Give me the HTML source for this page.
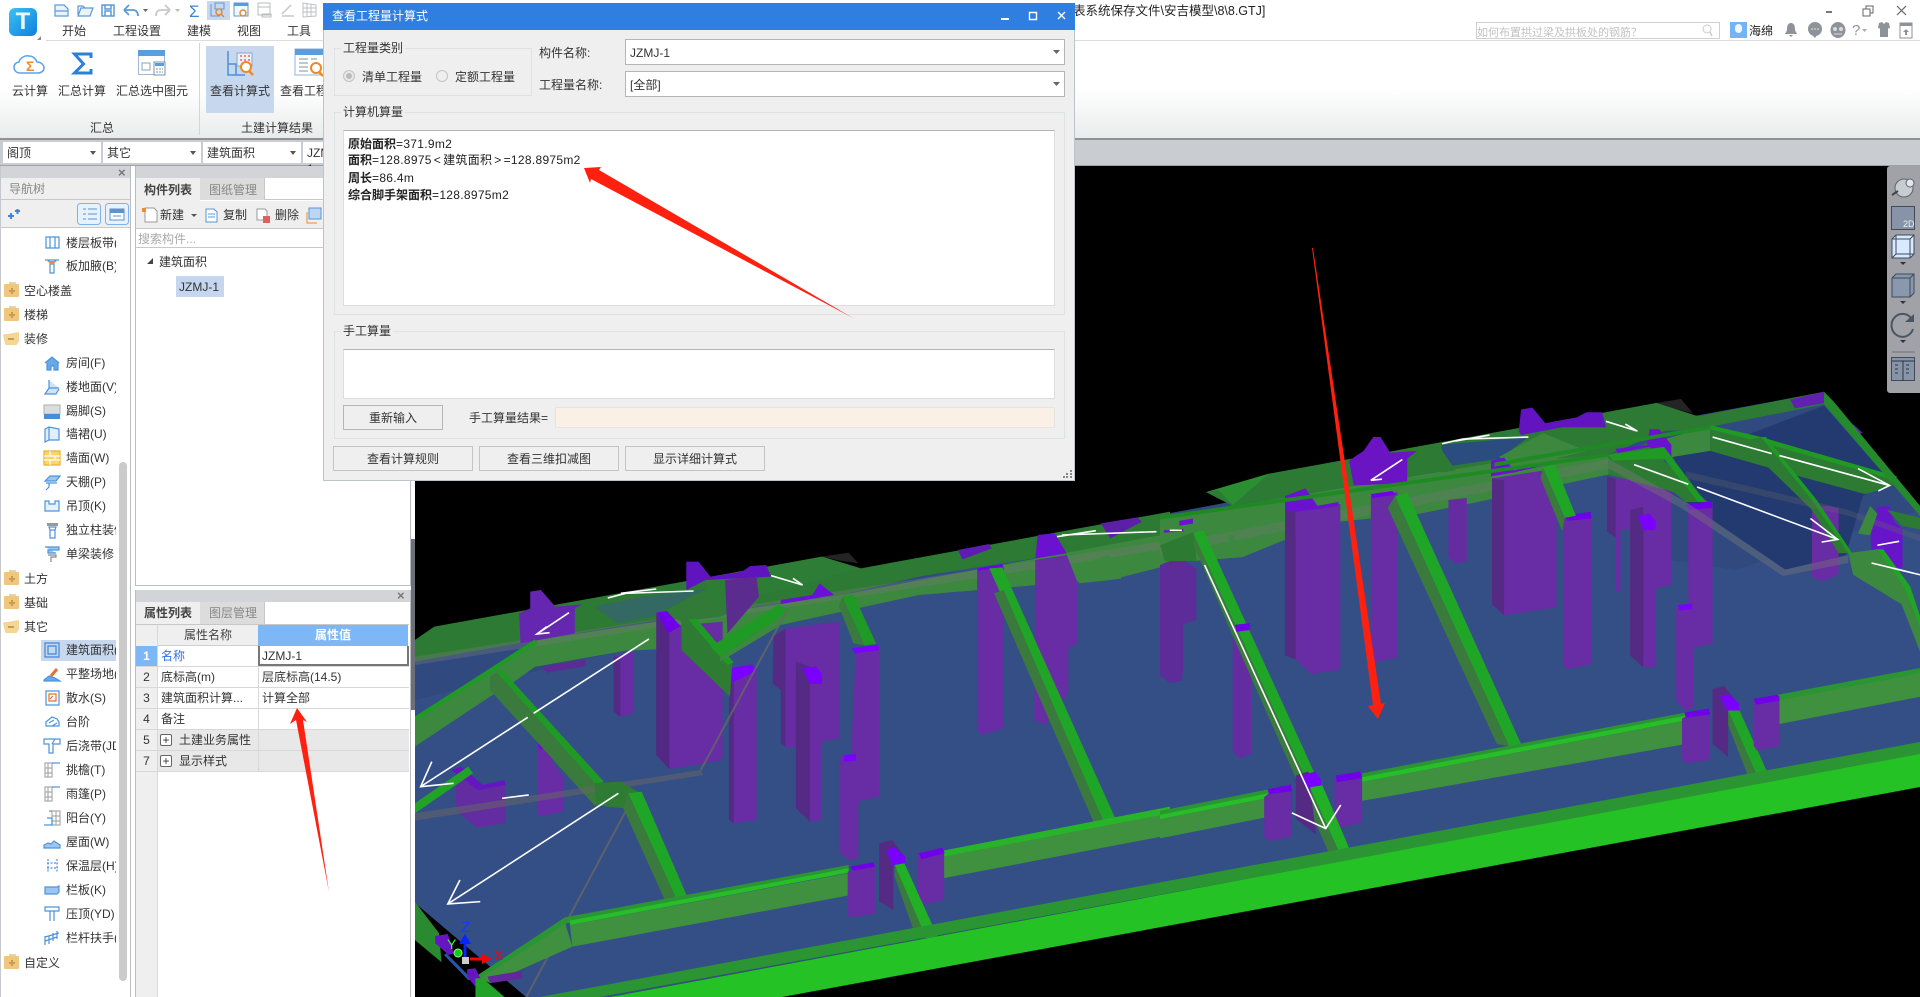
<!DOCTYPE html>
<html lang="zh"><head><meta charset="utf-8"><title>查看工程量计算式</title>
<style>
html,body{margin:0;padding:0;background:#fff}
#r{position:relative;width:1920px;height:997px;overflow:hidden;background:#fff;font:12px/16px "Liberation Sans","Noto Sans CJK SC",sans-serif;color:#333}
.b,.t{position:absolute;box-sizing:border-box}
.t{white-space:nowrap;height:16px}
svg{position:absolute;overflow:visible}
.g{color:#888}
.in{position:absolute;box-sizing:border-box;background:#fff;border:1px solid #b5b5b5}
.btn{position:absolute;box-sizing:border-box;background:#efefef;border:1px solid #c4c4c4;text-align:center;line-height:24px;color:#333}
.gp{position:absolute;box-sizing:border-box;border:1px solid #dfe2e2}
.lg{position:absolute;background:#efefef;padding:0 2px;height:16px;white-space:nowrap}
.cb{position:absolute;top:142px;height:21px;background:#fff;box-sizing:border-box;padding:3px 0 0 4px}
.cb i{position:absolute;right:5px;top:9px;border:3px solid transparent;border-top:4px solid #555;border-bottom:0}
.row{position:absolute;left:136px;width:273px;height:21px;border-bottom:1px solid #d8d8d8;box-sizing:border-box}
.n{position:absolute;left:0;top:0;width:22px;height:20px;background:#efefef;text-align:center;line-height:20px;border-right:1px solid #d8d8d8;box-sizing:border-box}
.c1{position:absolute;left:25px;top:2px;white-space:nowrap}
.c2{position:absolute;left:122px;top:0;width:151px;height:20px;padding:2px 0 0 3px;box-sizing:border-box;border-left:1px solid #d8d8d8;white-space:nowrap}
.tr{position:absolute;left:66px;width:50px;overflow:hidden;white-space:nowrap;height:16px}
.pr{position:absolute;left:24px;white-space:nowrap;height:16px}
.ic{position:absolute;left:44px;width:16px;height:16px}
.fo{position:absolute;left:4px;width:15px;height:13px;background:linear-gradient(#c99d4c,#c99d4c) center/2px 6px no-repeat,#eec67f;border-radius:1px}
.fo:before{content:"";position:absolute;left:5px;top:-2px;width:7px;height:2px;background:#e4d3ae}
.fo:after{content:"";position:absolute;left:4.500px;top:5.500px;width:6px;height:2px;background:#c99d4c}
.fo.op{background:#f3d595;left:3px;width:16px;clip-path:polygon(0 20%,100% 0,100% 70%,85% 100%,15% 100%)}
.ic *{fill:none;stroke:#4d93dc;stroke-width:1.2}
.d{letter-spacing:.3px}
</style></head><body><div id="r">

<!-- title bar -->
<div class="t" style="left:1073px;top:3px;color:#222;font-size:12.500px">表系统保存文件\安吉模型\8\8.GTJ]</div>
<div class="b" style="left:46px;top:40px;width:1874px;height:1px;background:#dcdcdc"></div>
<div class="b" style="left:9px;top:8px;width:28px;height:28px;border-radius:6px;background:linear-gradient(135deg,#3cc1f2,#0f7fe0)"></div>
<div class="t" style="left:14px;top:9px;width:18px;height:26px;font:bold 24px/26px 'Liberation Sans',sans-serif;color:#e9f8ff;text-align:center">T</div>
<svg style="left:0;top:0" width="340" height="42" viewBox="0 0 340 42">
<path d="M37 40h4v-4z" fill="#8a8a8a"/>
<g fill="none" stroke="#5d9ad6" stroke-width="1.2">
<path d="M55 5h9l4 4v7H55zM55 11h13" fill="#eaf3fb"/>
<path d="M78 16l3-8h12l-3 8zM78 15V6h5l2 2h5" fill="#eaf3fb"/>
<path d="M102 5h12v11h-12zM105 5v4h6V5M105 16v-5h6v5" stroke-width="1.5"/>
<path d="M124 10h9c3 0 5 2 5 6M124 10l5-5M124 10l5 5" stroke-width="1.8"/>
<path d="M170 10h-9c-3 0-5 2-5 6M170 10l-5-5M170 10l-5 5" stroke="#c5c9ce" stroke-width="1.8"/>
</g>
<path d="M143 9h5l-2.500 3z" fill="#666"/><path d="M175 9h5l-2.500 3z" fill="#bbb"/>
<text x="189" y="17" font-size="17" fill="#3d84d0" font-family="Liberation Sans">Σ</text>
<rect x="207" y="1" width="23" height="19" fill="#c6d7ee"/>
<path d="M211 4v12h9M215 3h9v6h-9z" fill="none" stroke="#5d9ad6"/><circle cx="219" cy="12" r="3" fill="none" stroke="#e08a35" stroke-width="1.500"/><path d="M221 14l3 3" stroke="#e08a35" stroke-width="1.500"/>
<path d="M234 3h14v13h-14z" fill="#f3f8fd" stroke="#5d9ad6"/><path d="M234 3h14v3h-14z" fill="#5d9ad6"/><circle cx="243" cy="13" r="3" fill="#fff" stroke="#e08a35" stroke-width="1.500"/>
<path d="M258 3h12v12h-12zM258 7h12M262 14h9v3h-9z" fill="none" stroke="#b9bcbe"/>
<path d="M282 14l9-9M282 16h12" fill="none" stroke="#c5c7c9" stroke-width="1.500"/>
<path d="M303 3l13 2v11l-13 1zM307 3v14M311 4v12M303 8h13M303 12h13" fill="none" stroke="#bdbfc1"/>
</svg>
<div class="t" style="left:62px;top:23px">开始</div>
<div class="t" style="left:113px;top:23px">工程设置</div>
<div class="t" style="left:187px;top:23px">建模</div>
<div class="t" style="left:237px;top:23px">视图</div>
<div class="t" style="left:287px;top:23px">工具</div>
<svg style="left:1826px;top:5px" width="94" height="12" viewBox="0 0 94 12"><path d="M0 7h6" stroke="#777" stroke-width="2"/><path d="M37 4h7v7h-7zM40 4V1h7v7h-3" fill="none" stroke="#666"/><path d="M71 1l9 9M80 1l-9 9" stroke="#666" stroke-width="1.200"/></svg>
<!-- search and user -->
<div class="b" style="left:1476px;top:22px;width:244px;height:17px;border:1px solid #d0d0d0;background:#fff"></div>
<div class="t" style="left:1477px;top:25px;color:#c2c2c2;font-size:11px">如何布置拱过梁及拱板处的钢筋？</div>
<svg style="left:1700px;top:23px" width="14" height="14"><circle cx="7" cy="6" r="4" fill="none" stroke="#ccc"/><path d="M10 9l2 4" stroke="#ccc" stroke-width="1.500"/></svg>
<div class="b" style="left:1730px;top:22px;width:17px;height:16px;background:#74b3f5"></div>
<div class="b" style="left:1735px;top:24px;width:7px;height:9px;border-radius:4px;background:#f0f7ff"></div>
<div class="t" style="left:1749px;top:23px;color:#222">海绵</div>
<svg style="left:1783px;top:20px" width="137" height="20" viewBox="0 0 137 20">
<path d="M8 3c-3 0-4 3-4 6s-2 4-2 5h12c0-1-2-2-2-5s-1-6-4-6zM6 15h4l-2 2z" fill="#8e9399"/>
<circle cx="32" cy="9" r="7" fill="#8e9399"/><path d="M29 15l3 3 2-3z" fill="#8e9399"/><path d="M28.500 9h1M31.500 9h1M34.500 9h1" stroke="#fff" stroke-width="1.500"/>
<ellipse cx="55" cy="10" rx="7.500" ry="8" fill="#8e9399"/><circle cx="52" cy="9" r="2" fill="#dadada"/><circle cx="58" cy="9" r="2" fill="#dadada"/><path d="M51 14h8" stroke="#dadada"/>
<text x="69" y="15" font-size="15" fill="#8e9399" font-family="Liberation Sans">?</text><path d="M79 9h5l-2.500 3z" fill="#aaa"/>
<path d="M96 3l3-1 2 2 2-2 3 1 1 5-2 .5V17H97V8.500L95 8z" fill="#8e9399"/>
<path d="M117 3h12v15h-12z" fill="#fff" stroke="#8e9399"/><path d="M117 3h12v3h-12zM123 9l3 3h-2v3h-2v-3h-2z" fill="#8e9399"/>
</svg>

<!-- ribbon -->
<div class="b" style="left:0;top:41px;width:1920px;height:97px;background:linear-gradient(#fff 0,#fff 50%,#e9ecec 100%)"></div>
<div class="b" style="left:0;top:138px;width:1920px;height:2px;background:#8f9192"></div>
<div class="b" style="left:199px;top:43px;width:1px;height:92px;background:#d4d7d8"></div>
<div class="b" style="left:206px;top:46px;width:68px;height:67px;background:#c6d7ee"></div>
<svg style="left:0;top:44px" width="330" height="40" viewBox="0 0 330 40">
<path d="M20 29c-4 0-6-3-6-6s3-5 5-5c1-4 6-7 10-6 4 0 7 3 8 6 4 0 7 3 7 6 0 3-3 5-6 5z" fill="#fff" stroke="#5ba3e6" stroke-width="1.500"/>
<text x="26" y="27" font-size="14" font-weight="bold" fill="#ee8b2e" font-family="Liberation Sans">Σ</text>
<path d="M91 14v-4H74.500l9 10-9 9H91v-4" fill="none" stroke="#2e7fd6" stroke-width="3"/>
<rect x="138.500" y="6.500" width="26" height="24" fill="#fff" stroke="#9fb8d4"/><rect x="138" y="6" width="27" height="6" fill="#5b9ee0"/>
<rect x="142" y="19" width="8" height="7" fill="none" stroke="#8aa1b8"/><rect x="154" y="18" width="11" height="13" fill="#fff" stroke="#7890a6"/><rect x="155" y="19" width="9" height="3" fill="#5b9ee0"/><path d="M156 25h7M156 28h7" stroke="#7890a6" stroke-dasharray="2 1"/>
<path d="M228 7v24h17M228 20h8v11" fill="none" stroke="#4a90d9" stroke-width="1.500"/>
<rect x="237" y="9" width="15" height="13" fill="#e8f1fb" stroke="#8aa8c8"/><path d="M240 12h2M244 12h2M248 12h2M240 16h2M244 16h2M248 16h2" stroke="#e66" stroke-width="1.500"/>
<circle cx="246" cy="23" r="5" fill="#fff" stroke="#ef8a20" stroke-width="2"/><path d="M249 27l4 4" stroke="#ef8a20" stroke-width="2.500"/>
<rect x="295" y="5" width="29" height="26" fill="#fff" stroke="#8fb3dc"/><rect x="295" y="5" width="29" height="6" fill="#5b9ee0"/><path d="M299 15h9M299 19h9M299 23h9M299 27h9M311 15h6" stroke="#7d90a5"/>
<circle cx="316" cy="24" r="5" fill="#fff" stroke="#ef8a20" stroke-width="2"/><path d="M319 28l4 4" stroke="#ef8a20" stroke-width="2.500"/>
</svg>
<div class="t" style="left:12px;top:83px">云计算</div>
<div class="t" style="left:58px;top:83px">汇总计算</div>
<div class="t" style="left:116px;top:83px">汇总选中图元</div>
<div class="t" style="left:210px;top:83px">查看计算式</div>
<div class="t" style="left:280px;top:83px">查看工程量</div>
<div class="t" style="left:90px;top:120px">汇总</div>
<div class="t" style="left:241px;top:120px">土建计算结果</div>
<!-- combos band -->
<div class="b" style="left:0;top:140px;width:1920px;height:26px;background:#c9ccd1;border-bottom:1px solid #9ea1a5"></div>
<div class="cb" style="left:3px;width:98px">阁顶<i></i></div>
<div class="cb" style="left:103px;width:98px">其它<i></i></div>
<div class="cb" style="left:203px;width:98px">建筑面积<i></i></div>
<div class="cb" style="left:303px;width:40px">JZMJ-1</div>

<!-- 3D viewport -->
<div class="b" style="left:415px;top:166px;width:1505px;height:831px;background:#000"></div>
<svg style="left:0;top:0" width="1920" height="997" viewBox="0 0 1920 997">
<defs><clipPath id="vp"><rect x="415" y="166" width="1505" height="831"/></clipPath></defs>
<g clip-path="url(#vp)">
<polygon points="415,653 1824,392 1920,510 1920,754 610,997 526,997 415,903" fill="#344f86"/>
<polygon points="415,653 1824,392 1920,510 1735,570 1670,560 1600,440 1000,560 415,700" fill="#2a4478" opacity=".4"/>

<!-- LEFT HALF (zoom A coords) -->
<g transform="translate(410,480) scale(.4847,.3333)">
 <!-- rear bands -->
 <polygon points="10,480 50,440 850,230 930,265 1568,95 1568,170 1050,290 890,345 510,420 260,480 10,545" fill="#2c7a34"/>
 <polygon points="260,480 510,425 890,345 1568,160 1568,255 1445,300 1375,305 1050,345 780,430 560,505 445,512 260,560" fill="#3c883e"/>
 <polygon points="850,230 905,218 925,250 880,240" fill="#333" opacity=".7"/>
 <polygon points="10,530 1568,180 1568,205 10,555" fill="#777" opacity=".38"/>
 <polygon points="380,380 430,430 660,360 620,325 480,350" fill="#3a5a8a" opacity=".55"/>
 <polygon points="520,395 620,320 710,370 640,410 560,425" fill="#317a38"/>
 <polygon points="610,295 850,230 930,265 720,345 640,385 610,330" fill="#2e7d36"/>
 <!-- columns -->
 <polygon points="420,530 460,515 460,700 435,712 420,695" fill="#682ca4"/><polygon points="420,530 434,535 434,712 420,695" fill="#552a85"/>
 <polygon points="262,790 292,780 295,850 318,890 318,995 270,1008 262,1000" fill="#682ca4"/>
 <polygon points="262,785 288,778 294,795 268,808" fill="#7600f0"/>
 <polygon points="270,560 362,538 362,558 282,578" fill="#5d2b95"/>
 <polygon points="248,335 270,330 300,380 355,373 340,385 340,460 228,490 225,400 248,385" fill="#6526b0"/>
 <polygon points="570,245 595,245 620,290 685,275 702,258 735,255 745,290 610,300 570,330" fill="#6014c0"/>
 <polygon points="650,300 715,290 720,350 655,460" fill="#5c2b90"/>
 <polygon points="533,440 645,425 645,840 535,868" fill="#682ca4"/><polygon points="508,400 535,460 535,868 508,825" fill="#532882"/>
 <polygon points="508,398 530,393 558,438 533,460" fill="#7000e8"/>
 <polygon points="775,445 885,425 885,775 848,785 848,1020 825,1025 825,610 775,600" fill="#682ca4"/>
 <polygon points="750,470 775,445 775,800 765,790 765,630 748,610" fill="#552a85"/>
 <polygon points="775,600 796,600 796,800 775,805" fill="#682ca4"/>
 <polygon points="796,545 825,560 825,1025 796,985" fill="#552a85"/>
 <polygon points="810,565 838,560 850,582 850,612 825,612" fill="#7a00ff"/>
 <polygon points="668,590 715,570 715,1020 668,1030" fill="#682ca4"/><polygon points="658,580 668,600 668,1030 658,1020" fill="#552a85"/>
 <polygon points="658,565 705,553 717,570 665,608" fill="#7a00ff"/>
 <polygon points="920,510 968,498 968,950 925,965 925,1135 905,1140 885,1115 885,830 910,825" fill="#682ca4"/>
 <polygon points="912,505 965,493 968,510 918,520" fill="#7a00ff"/><polygon points="895,825 920,822 920,842 895,845" fill="#7a00ff"/>
 <polygon points="1170,270 1225,260 1225,745 1180,765 1170,750" fill="#682ca4"/><polygon points="1170,265 1222,252 1224,262 1172,272" fill="#7000e8"/>
 <polygon points="1290,240 1355,225 1378,310 1378,490 1358,505 1358,640 1310,735 1288,720" fill="#682ca4"/>
 <polygon points="1290,235 1295,165 1330,160 1355,220" fill="#6a12d0"/>
 <polygon points="1548,300 1568,280 1568,605 1548,590" fill="#6226a6"/>
 <polygon points="1130,210 1195,192 1200,205 1140,238" fill="#5f1cb4"/><polygon points="1425,130 1500,112 1510,125 1445,175" fill="#5d1fa8"/>
 <polygon points="845,310 875,345 765,372 765,360 830,345" fill="#6a10d8"/>
 <polygon points="105,870 150,915 197,905 197,1030 138,1043 105,1005 95,975 95,875" fill="#632ca0"/>
 <polygon points="85,870 105,860 150,915 195,900 197,915 140,930" fill="#6516c0"/>
 <!-- beams -->
 <polygon points="10,710 160,570 258,478 268,550 210,610 165,650 10,800" fill="#3c883e"/>
 <polygon points="10,710 160,570 258,478 262,490 165,580 10,725" fill="#1f9a24"/>
 <polygon points="165,590 165,630 380,975 440,985 395,910 185,570" fill="#3a7a3c"/>
 <polygon points="175,570 190,570 400,905 385,915" fill="#1f9a24"/>
 <polygon points="560,425 582,418 665,545 660,650 560,510" fill="#2e7b34"/>
 <polygon points="575,420 590,415 668,548 655,555" fill="#1f9a24"/>
 <polygon points="620,500 760,375 785,390 640,530" fill="#1f9a24"/>
 <polygon points="640,530 785,390 760,440 640,545" fill="#3c883e"/>
 <polygon points="892,350 915,343 962,492 938,497" fill="#1f9a24"/><polygon points="885,380 892,350 938,497 915,490" fill="#3a7a3c"/>
 <polygon points="1195,265 1222,262 1455,1015 1430,1022" fill="#20a626"/><polygon points="1205,340 1410,1025 1430,1022 1225,330" fill="#3a7a3c"/>
 <polygon points="1380,310 1375,260 1440,225 1468,295 1445,300" fill="#3c883e"/>
 <polygon points="10,970 120,860 130,880 10,1000" fill="#22a328"/>
 <polygon points="10,1000 600,870 605,885 10,1022" fill="#666" opacity=".55"/>
 <polygon points="380,910 435,905 470,935 440,985 385,975" fill="#2e7b34"/>
 <polyline points="780,385 600,870" fill="none" stroke="#666" stroke-width="2" opacity=".8" vector-effect="non-scaling-stroke"/>
 <polyline points="450,980 240,1551" fill="none" stroke="#666" stroke-width="2" opacity=".8" vector-effect="non-scaling-stroke"/>
 <polygon points="450,940 478,935 572,1250 550,1258" fill="#20a626"/><polygon points="440,985 450,940 550,1258 525,1258" fill="#3a7a3c"/>
 <!-- mid row -->
 <polygon points="320,1312 140,1490 165,1510 335,1400 320,1330" fill="#3f903f"/>
 <polygon points="320,1312 140,1485 145,1495 325,1328" fill="#2b9433"/>
 <polygon points="320,1312 905,1155 905,1175 325,1330" fill="#2b9433"/>
 <polygon points="330,1322 905,1165 905,1178 330,1335" fill="#27bf28"/>
 <polygon points="330,1335 910,1178 910,1245 335,1400" fill="#3f903f"/>
 <polygon points="1100,1120 1568,985 1568,1065 1100,1195" fill="#3f903f"/>
 <polygon points="1100,1112 1568,980 1568,1000 1100,1130" fill="#27b428"/>
 <polygon points="903,1175 960,1155 960,1300 912,1313 903,1305" fill="#682ca4"/><polygon points="908,1160 955,1147 960,1160 915,1172" fill="#7000e8"/>
 <polygon points="968,1090 995,1080 1020,1130 1020,1150 997,1155 997,1290 968,1265" fill="#552a85"/>
 <polygon points="983,1110 1000,1103 1022,1130 1022,1152 995,1155" fill="#7a00ff"/>
 <polygon points="1048,1120 1102,1105 1102,1260 1055,1275 1048,1265" fill="#682ca4"/><polygon points="1050,1120 1098,1103 1103,1120 1055,1138" fill="#7000e8"/>
 <polygon points="1000,1155 1020,1150 1088,1368 1065,1375" fill="#22b027"/><polygon points="1000,1190 1000,1155 1065,1375 1045,1375" fill="#3a7a3c"/>
 <!-- corner -->
 <polygon points="10,1265 60,1360 65,1447 10,1380" fill="#2a8a30"/>
 <polygon points="52,1368 78,1362 90,1420 80,1425 52,1390" fill="#6516c0"/>
 <polygon points="75,1420 130,1500 120,1500 70,1425" fill="#2855a8"/>
 <polygon points="118,1468 135,1465 145,1495 135,1520 118,1490" fill="#6516c0"/>
 <polygon points="135,1495 150,1495 195,1551 135,1551" fill="#22a328"/>
 <polygon points="160,1490 230,1473 232,1495 165,1510" fill="#62289c"/>
 <!-- white lines -->
 <g fill="none" stroke="#fff" stroke-width="1.600">
 <polyline points="493,477 255,700" vector-effect="non-scaling-stroke"/><polyline points="243,712 22,920" vector-effect="non-scaling-stroke"/>
 <polyline points="45,845 22,920 90,910" vector-effect="non-scaling-stroke"/>
 <polyline points="430,940 78,1272" vector-effect="non-scaling-stroke"/><polyline points="103,1200 78,1272 145,1265" vector-effect="non-scaling-stroke"/>
 <polyline points="328,398 262,462" vector-effect="non-scaling-stroke"/><polyline points="282,440 262,462 288,458" vector-effect="non-scaling-stroke"/>
 <polyline points="408,354 445,340 585,333" vector-effect="non-scaling-stroke"/><polyline points="435,340 508,327" vector-effect="non-scaling-stroke"/>
 <polyline points="745,287 810,315 790,295" vector-effect="non-scaling-stroke"/>
 <polyline points="1335,170 1415,152" vector-effect="non-scaling-stroke"/><polyline points="1345,165 1540,155" vector-effect="non-scaling-stroke"/>
 <polyline points="190,955 245,945" vector-effect="non-scaling-stroke"/>
 </g>
</g>

<!-- RIGHT HALF (zoom B coords) -->
<g transform="translate(1160,380) scale(.4847,.3935)">
 <polygon points="1135,175 1370,65 1505,255 1450,295 1415,445 1290,482 1085,310 1060,195" fill="#223a70"/>
 <polygon points="0,350 150,320 690,210 925,190 1135,118 1135,180 1060,195 925,240 830,265 735,290 535,340 370,360 270,400 170,450 70,460 0,425" fill="#3c883e"/>
 <polygon points="95,285 225,238 1025,58 1110,92 1370,30 1370,62 1110,125 1040,130 925,190 690,210 150,320" fill="#2c7a34"/>
 <polygon points="1025,58 1075,48 1100,85 1060,72" fill="#333" opacity=".7"/>
 <polygon points="580,165 760,145 700,200 590,220" fill="#2a4c7e"/>
 <polygon points="700,195 790,135 880,180 800,205 730,230" fill="#3c883e"/>
 <polygon points="0,420 925,200 925,225 0,445" fill="#777" opacity=".32"/>
 <polygon points="140,440 170,450 150,392 142,395" fill="#3c883e"/>
 <!-- columns -->
 <polygon points="0,470 40,450 75,480 75,610 48,620 48,730 45,765 20,770 0,750" fill="#5e2c98"/>
 <polygon points="150,640 188,640 188,950 165,962 150,945" fill="#642ca0"/>
 <polygon points="435,295 490,285 490,705 435,720" fill="#682ca4"/><polygon points="435,290 480,282 485,292 438,300" fill="#7000e8"/>
 <polygon points="595,305 633,300 633,460 610,467 595,450" fill="#642ca0"/>
 <polygon points="280,335 372,315 372,735 312,748 280,710" fill="#682ca4"/><polygon points="258,320 280,335 280,710 258,700" fill="#552a85"/>
 <polygon points="258,295 300,275 325,320 368,310 368,320 280,335 258,330" fill="#6a12d0"/>
 <polygon points="420,180 440,145 455,145 475,185 530,180 510,200 510,262 400,268 390,205" fill="#6a14c4"/>
 <polygon points="685,250 818,225 818,578 710,598 685,570" fill="#682ca4"/><polygon points="685,250 710,255 710,598 685,570" fill="#552a85"/>
 <polygon points="683,205 710,197 730,230 810,205 812,212 730,235 683,245" fill="#6a12d0"/>
 <polygon points="740,130 745,75 768,70 795,110 860,95 880,82 912,82 920,120 830,120 745,140" fill="#6214c0"/>
 <polygon points="840,350 890,342 890,722 840,735 832,725 832,355" fill="#682ca4"/><polygon points="835,345 888,335 890,352 840,358" fill="#7000e8"/>
 <polygon points="940,250 1055,230 1055,520 1022,530 1022,730 997,730 997,380 950,380 950,540 940,535" fill="#682ca4"/>
 <polygon points="922,245 940,250 940,400 922,385" fill="#552a85"/>
 <polygon points="970,330 997,322 997,730 970,700" fill="#552a85"/><polygon points="985,345 1010,340 1022,358 1022,380 998,382" fill="#7a00ff"/>
 <polygon points="1090,320 1140,310 1140,670 1102,680 1102,830 1085,840 1065,815 1065,575 1090,570" fill="#682ca4"/>
 <polygon points="1068,572 1098,568 1098,582 1072,586" fill="#7a00ff"/><polygon points="1085,318 1138,307 1140,325 1090,330" fill="#7000e8"/>
 <polygon points="940,175 1005,165 1010,125 1030,125 1055,165 1055,195 1020,200 1010,210 950,205" fill="#6a12d0"/>
 <polygon points="1345,325 1375,320 1400,325 1400,495 1365,512 1345,500" fill="#682ca4"/>
 <polygon points="1465,380 1480,340 1478,322 1505,320 1515,360 1532,380 1532,478 1470,475" fill="#6616c8"/>
 <polygon points="8,382 48,378 48,385 8,388" fill="#6a12d0"/><polygon points="40,358 68,352 68,365 40,370" fill="#6a12d0"/>
 <polygon points="1300,50 1370,30 1385,55 1310,72" fill="#6020b0"/><polygon points="1410,125 1430,112 1450,135 1430,140" fill="#6020b0"/>
 <!-- right roof -->
 <polygon points="1135,115 1240,145 1520,250 1510,270 1455,290 1290,235 1135,180" fill="#2d7a33"/>
 <polygon points="1135,115 1240,145 1520,245 1518,255 1240,158 1135,125" fill="#1f9a24"/>
 <polygon points="1220,150 1240,145 1350,300 1425,440 1400,440 1345,330 1220,180" fill="#2d7a33"/>
 <polygon points="1240,145 1250,145 1355,305 1428,440 1420,440 1345,305" fill="#1f9a24"/>
 <polygon points="925,190 1010,170 1130,310 1085,310 1060,285 925,240" fill="#2d7a33"/>
 <polygon points="925,190 1040,170 1125,310 1110,310 1040,200 935,205" fill="#1f9a24"/>
 <polygon points="1370,30 1390,55 1568,320 1568,345 1370,62" fill="#248a2c"/>
 <polygon points="925,200 1085,310 1290,482 1420,445 1420,465 1285,498 1075,325 925,225" fill="#777" opacity=".42"/>
 <polygon points="1085,232 1420,330 1568,395 1568,410 1420,345 1085,250" fill="#666" opacity=".3"/>
 <polygon points="1420,440 1480,430 1540,520 1568,620 1568,690 1530,570 1430,495" fill="#3c883e"/>
 <polygon points="1480,430 1492,430 1548,525 1568,600 1568,625 1535,525" fill="#20a626"/>
 <polygon points="1440,390 1465,320 1480,340 1465,395" fill="#3c883e"/>
 <polygon points="1500,330 1568,350 1568,380 1530,370" fill="#2d7a33"/>
 <polygon points="555,190 585,185 610,230 580,235" fill="#2d7a33"/>
 <polygon points="0,345 925,185 925,195 0,355" fill="#1f8a24"/><polygon points="690,210 1135,115 1135,125 690,220" fill="#1f8a24"/>
 <polygon points="95,285 225,238 150,318 120,280" fill="#2a8f31"/>
 <polygon points="0,420 72,385 75,460 10,460" fill="#2d7a33"/>
 <!-- cross beams -->
 <polygon points="68,388 90,382 400,1218 378,1222" fill="#20a626"/>
 <polygon points="70,420 68,388 378,1222 355,1220 150,650" fill="#3a7a3c"/>
 <polygon points="155,622 185,618 186,635 158,640" fill="#7000e8"/>
 <polygon points="485,295 510,287 745,925 720,930" fill="#20a626"/><polygon points="470,325 485,295 720,930 695,925" fill="#3a7a3c"/>
 <polygon points="790,222 815,215 858,345 835,350" fill="#20a626"/><polygon points="785,250 790,222 835,350 830,385" fill="#3a7a3c"/>
 <polygon points="1172,840 1195,838 1262,1022 1240,1028" fill="#20a626"/><polygon points="1170,870 1172,840 1240,1028 1220,1028" fill="#3a7a3c"/>
 <!-- mid row -->
 <polygon points="0,1095 225,1040 225,1060 0,1115" fill="#2b9433"/><polygon points="0,1105 225,1050 225,1062 0,1116" fill="#27bf28"/>
 <polygon points="0,1116 225,1062 225,1110 0,1165" fill="#3f903f"/>
 <polygon points="415,1000 1085,845 1085,862 415,1017" fill="#2b9433"/><polygon points="415,1010 1085,853 1085,865 415,1022" fill="#27bf28"/>
 <polygon points="415,1022 1085,865 1085,925 415,1070" fill="#3f903f"/>
 <polygon points="1275,800 1568,732 1568,752 1275,820" fill="#2b9433"/><polygon points="1275,815 1568,745 1568,805 1275,875" fill="#3f903f"/>
 <polygon points="225,1050 272,1035 272,1160 225,1172 215,1160 215,1060" fill="#682ca4"/><polygon points="222,1040 270,1028 272,1045 225,1052" fill="#7000e8"/>
 <polygon points="280,1005 305,995 332,1030 310,1035 322,1155 280,1115" fill="#552a85"/>
 <polygon points="295,1005 320,995 332,1015 332,1032 305,1035" fill="#7a00ff"/>
 <polygon points="360,1015 417,1000 417,1125 368,1138 360,1130" fill="#682ca4"/><polygon points="362,1005 413,995 417,1012 365,1022" fill="#7000e8"/>
 <polygon points="1085,855 1135,840 1135,965 1085,975 1077,965 1077,860" fill="#682ca4"/><polygon points="1082,845 1132,835 1135,850 1085,858" fill="#7000e8"/>
 <polygon points="1140,785 1165,778 1190,820 1190,835 1172,840 1172,958 1140,925" fill="#552a85"/>
 <polygon points="1155,802 1175,800 1195,822 1195,840 1170,840" fill="#7a00ff"/>
 <polygon points="1225,815 1278,802 1278,930 1232,942 1225,930" fill="#682ca4"/><polygon points="1225,810 1275,800 1278,815 1230,825" fill="#7000e8"/>
 <polygon points="310,1035 335,1030 400,1218 378,1222" fill="#22b027"/>
 <!-- white lines -->
 <g fill="none" stroke="#fff" stroke-width="1.600">
 <polyline points="92,470 342,1140" vector-effect="non-scaling-stroke"/><polyline points="272,1100 342,1140 373,1080" vector-effect="non-scaling-stroke"/>
 <polyline points="1140,145 1262,187" vector-effect="non-scaling-stroke"/><polyline points="1278,192 1505,268" vector-effect="non-scaling-stroke"/><polyline points="1440,225 1505,268 1482,282" vector-effect="non-scaling-stroke"/>
 <polyline points="978,215 1090,265" vector-effect="non-scaling-stroke"/><polyline points="1108,272 1398,405" vector-effect="non-scaling-stroke"/><polyline points="1342,352 1398,405 1365,412" vector-effect="non-scaling-stroke"/>
 <polyline points="500,202 435,255 458,252" vector-effect="non-scaling-stroke"/>
 <polyline points="582,162 625,150 760,145" vector-effect="non-scaling-stroke"/><polyline points="610,155 680,140" vector-effect="non-scaling-stroke"/>
 <polyline points="920,105 985,130 960,112" vector-effect="non-scaling-stroke"/>
 <polyline points="1480,420 1525,410" vector-effect="non-scaling-stroke"/><polyline points="1468,465 1568,495" vector-effect="non-scaling-stroke"/>
 <polyline points="20,382 45,382" vector-effect="non-scaling-stroke"/>
 </g>
</g>
<!-- front beam -->
<polygon points="1920,742 1920,756 600,997 540,997" fill="#2b9433"/>
<polygon points="1920,754 1920,787 782,997 610,997" fill="#25c225"/>
<!-- gizmo -->
<path d="M465 958V941" stroke="#0a24ff" stroke-width="3"/><path d="M459 944l6-10 6 10z" fill="#0a24ff"/>
<path d="M470 959h14" stroke="#f00" stroke-width="3"/><path d="M482 954l10 5-10 5z" fill="#f00"/>
<circle cx="458" cy="953" r="4" fill="#1c1" stroke="#8f8"/>
<rect x="462" y="957" width="7" height="7" fill="#ccc"/>
<text x="461" y="932" font-size="15" fill="#1438ff" font-family="Liberation Sans">Z</text>
<text x="447" y="949" font-size="14" fill="#3f3" font-family="Liberation Sans">Y</text>
<text x="494" y="960" font-size="14" fill="#f00" font-family="Liberation Sans">X</text>
<!-- long red arrow -->
<polygon points="1312,248 1373,705 1368,706 1378,719 1385,703 1381,704 1313,248" fill="#ff2010"/>
</g>
</svg>
<!-- view toolbar -->
<div class="b" style="left:1887px;top:166px;width:33px;height:227px;background:#a0a2a8;border-radius:3px 0 0 3px"></div>
<svg style="left:1887px;top:166px" width="33" height="227" viewBox="0 0 33 227">
<circle cx="17" cy="22" r="9" fill="#c8ccd0" stroke="#5b6470"/><circle cx="23" cy="17" r="4" fill="#e4e6e8" stroke="#5b6470"/><path d="M5 29l6-4" stroke="#444" stroke-width="2"/>
<rect x="4.500" y="40.500" width="23" height="23" fill="#8794a8" stroke="#3f4a5c"/><text x="16" y="61" font-size="9" fill="#eee" font-family="Liberation Sans">2D</text>
<path d="M5 73l4-4h18v19l-4 4H5z" fill="#d8eaff" stroke="#3f4a5c"/><path d="M5 73h18v19M23 73l4-4M9 69v19h18M5 92l4-4" fill="none" stroke="#3f4a5c"/>
<path d="M13 96h6l-3 3z" fill="#333"/>
<path d="M5 112l4-4h18v19l-4 4H5z" fill="#8a98ad" stroke="#3f4a5c"/><path d="M5 112h18v19M23 112l4-4" fill="none" stroke="#3f4a5c"/>
<path d="M13 135h6l-3 3z" fill="#333"/>
<path d="M24 152a11 11.500 0 1 0 2 11" fill="none" stroke="#4a5563" stroke-width="2"/><path d="M18 156h9v-8z" fill="#4a5563"/>
<path d="M13 174h6l-3 3z" fill="#333"/><path d="M5 186h23" stroke="#6f7278"/>
<rect x="4.500" y="191.500" width="23" height="23" fill="#8794a8" stroke="#3f4a5c"/><path d="M5 195h23M16 195v20M8 199h3M8 203h3M8 207h3M19 199h3M19 203h3M19 207h3" stroke="#2b3442" fill="none"/>
</svg>

<!-- left nav panel -->
<div class="b" style="left:0;top:166px;width:131px;height:831px;background:#fff;border-left:1px solid #c5c8cc;border-right:1px solid #b9bcc1"></div>
<div class="b" style="left:1px;top:166px;width:129px;height:12px;background:#d3d4d8"></div>
<div class="t" style="left:118px;top:165px;color:#777;font-size:13px;font-weight:bold">×</div>
<div class="b" style="left:1px;top:178px;width:129px;height:22px;background:#efefef;border-bottom:1px solid #c8c8c8"></div>
<div class="t g" style="left:9px;top:181px">导航树</div>
<div class="b" style="left:1px;top:200px;width:129px;height:28px;background:#efefef;border-bottom:1px solid #c8c8c8"></div>
<svg style="left:7px;top:208px" width="14" height="14"><path d="M1 8h6M4 5v6M8 3h5M10.500 1v5" stroke="#3f85d6" stroke-width="2"/></svg>
<svg style="left:77px;top:203px" width="53" height="24" viewBox="0 0 53 24"><rect x=".5" y=".5" width="23" height="21" rx="3" fill="#e8f2fc" stroke="#7db3ea"/><path d="M6 6h3M11 6h9M6 11h3M11 11h9M6 16h3M11 16h9" stroke="#5a94d4"/><rect x="28.500" y=".5" width="23" height="21" rx="3" fill="#e8f2fc" stroke="#7db3ea"/><path d="M33 6h14v11H33z" fill="#fff" stroke="#5a94d4"/><path d="M33 6h14v4H33z" fill="#5a94d4"/><path d="M36 13h8" stroke="#5a94d4"/></svg>
<!-- selected row -->
<div class="b" style="left:41px;top:640px;width:75px;height:21px;background:#c6d7ee"></div>
<div class="ic" style="top:235px"><svg width="16" height="16"><path d="M2 2h13v11H2zM6 2v11M11 2v11"/></svg></div><div class="tr" style="top:235px">楼层板带(</div>
<div class="ic" style="top:258px"><svg width="16" height="16"><path d="M1 2h14M4 2l4 4 4-4M6 6h4v9H6z"/><path d="M3 3h10l-5 4z" style="fill:#f08a30;stroke:none"/></svg></div><div class="tr" style="top:258px">板加腋(B)</div>
<div class="fo" style="top:284px"></div><div class="pr" style="top:283px">空心楼盖</div>
<div class="fo" style="top:308px"></div><div class="pr" style="top:307px">楼梯</div>
<div class="fo op" style="top:332px"></div><div class="pr" style="top:331px">装修</div>
<div class="ic" style="top:355px"><svg width="16" height="16"><path d="M1 8l7-6 7 6M3 8v7h4v-4h3v4h4V8" style="fill:#6aa8e8"/></svg></div><div class="tr" style="top:355px">房间(F)</div>
<div class="ic" style="top:379px"><svg width="16" height="16"><path d="M5 1v8h10M5 9l-4 6h11l3-5" style="fill:#cfe2f7"/></svg></div><div class="tr" style="top:379px">楼地面(V)</div>
<div class="ic" style="top:403px"><svg width="16" height="16"><path d="M0 2h16v9H0z" style="fill:#dcdcdc;stroke:#bbb"/><path d="M0 11h16v5H0z" style="fill:#4a8cdc;stroke:none"/></svg></div><div class="tr" style="top:403px">踢脚(S)</div>
<div class="ic" style="top:426px"><svg width="16" height="16"><path d="M1 3l4-2 10 2v11H5l-4 2zM5 1v13" style="fill:#e2eefb"/></svg></div><div class="tr" style="top:426px">墙裙(U)</div>
<div class="ic" style="top:450px"><svg width="16" height="16"><path d="M0 1h16v14H0z" style="fill:#fbd46a;stroke:#eab030"/><path d="M0 6h16M0 10h16M6 1v5M11 6v4M6 10v5" style="stroke:#fff"/></svg></div><div class="tr" style="top:450px">墙面(W)</div>
<div class="ic" style="top:474px"><svg width="16" height="16"><path d="M1 7l5-5h10l-4 5z" style="fill:#9cc6f1"/><path d="M2 9h11M5 9v4l-3 3"/></svg></div><div class="tr" style="top:474px">天棚(P)</div>
<div class="ic" style="top:498px"><svg width="16" height="16"><path d="M1 3h4v3h6V3h4v10H1z" style="fill:#e8f2fc"/></svg></div><div class="tr" style="top:498px">吊顶(K)</div>
<div class="ic" style="top:522px"><svg width="16" height="16"><path d="M3 1h11v3H3z" style="fill:#999;stroke:none"/><path d="M5 5h7l-1 3H6zM6 8h5v8H6z"/></svg></div><div class="tr" style="top:522px">独立柱装修</div>
<div class="ic" style="top:546px"><svg width="16" height="16"><path d="M1 1h14v3H4v3h8" style="fill:#9cc6f1"/><path d="M4 9h8v2H7v5" style="stroke:#888"/></svg></div><div class="tr" style="top:546px">单梁装修</div>
<div class="fo" style="top:572px"></div><div class="pr" style="top:571px">土方</div>
<div class="fo" style="top:596px"></div><div class="pr" style="top:595px">基础</div>
<div class="fo op" style="top:620px"></div><div class="pr" style="top:619px">其它</div>
<div class="ic" style="top:642px"><svg width="16" height="16"><path d="M1 1h14v14H1zM4 4h8v8H4z" style="stroke:#3f85d6"/></svg></div><div class="tr" style="top:642px">建筑面积(</div>
<div class="ic" style="top:666px"><svg width="16" height="16"><path d="M0 14l5-4 6 2 5 3H0z" style="fill:#6aa8e8"/><path d="M7 10l6-7" style="stroke:#e8702a;stroke-width:3"/></svg></div><div class="tr" style="top:666px">平整场地(</div>
<div class="ic" style="top:690px"><svg width="16" height="16"><path d="M2 1h13v14H2z"/><path d="M5 4h7v7H5zM9 6l-3 3" style="stroke:#e8702a"/></svg></div><div class="tr" style="top:690px">散水(S)</div>
<div class="ic" style="top:714px"><svg width="16" height="16"><path d="M2 8l6-5 5 2 2 3v4H2zM5 9l5-3M8 12l5-3"/></svg></div><div class="tr" style="top:714px">台阶</div>
<div class="ic" style="top:738px"><svg width="16" height="16"><path d="M0 1h16v5h-7v9H5V6H0zM8 6l3-5"/></svg></div><div class="tr" style="top:738px">后浇带(JD)</div>
<div class="ic" style="top:762px"><svg width="16" height="16"><path d="M1 1h7v14H1zM1 6h7M1 11h7M4 1v14" style="stroke:#aaa"/><path d="M8 1h8"/></svg></div><div class="tr" style="top:762px">挑檐(T)</div>
<div class="ic" style="top:786px"><svg width="16" height="16"><path d="M1 1h7v14H1zM1 6h7M1 11h7M4 1v14" style="stroke:#aaa"/><path d="M8 1h8"/></svg></div><div class="tr" style="top:786px">雨篷(P)</div>
<div class="ic" style="top:810px"><svg width="16" height="16"><path d="M8 1h8v14H8zM12 1v14M8 6h8M8 11h8" style="stroke:#aaa"/><path d="M0 15h8V8H3M5 1h3"/></svg></div><div class="tr" style="top:810px">阳台(Y)</div>
<div class="ic" style="top:834px"><svg width="16" height="16"><path d="M0 11l4-2 3 1 3-3 3 2 3 2v3H0z" style="fill:#9cc6f1"/></svg></div><div class="tr" style="top:834px">屋面(W)</div>
<div class="ic" style="top:858px"><svg width="16" height="16"><path d="M4 1v14M13 1v14M3 5h11M3 10h11" style="stroke-dasharray:2 1.500"/></svg></div><div class="tr" style="top:858px">保温层(H)</div>
<div class="ic" style="top:882px"><svg width="16" height="16"><path d="M1 5h12l2-1v6l-2 2H1z" style="fill:#9cc6f1"/></svg></div><div class="tr" style="top:882px">栏板(K)</div>
<div class="ic" style="top:906px"><svg width="16" height="16"><path d="M1 1h14v4H1zM6 5v10M10 5v10"/></svg></div><div class="tr" style="top:906px">压顶(YD)</div>
<div class="ic" style="top:930px"><svg width="16" height="16"><path d="M1 6v9M5 6v8M9 3v8M13 1v8M1 7l14-4M1 11l12-4"/></svg></div><div class="tr" style="top:930px">栏杆扶手(</div>
<div class="fo" style="top:956px"></div><div class="pr" style="top:955px">自定义</div>
<div class="b" style="left:119px;top:462px;width:8px;height:519px;background:#cbcbcb;border-radius:4px"></div>

<!-- component panel -->
<div class="b" style="left:135px;top:166px;width:276px;height:420px;background:#fff;border:1px solid #b9bcc1;border-top:0"></div>
<div class="b" style="left:136px;top:166px;width:274px;height:12px;background:#d3d4d8"></div>
<div class="b" style="left:136px;top:178px;width:274px;height:22px;background:#fff;border-bottom:1px solid #c8c8c8"></div>
<div class="b" style="left:136px;top:178px;width:64px;height:23px;background:#efefef"></div>
<div class="b" style="left:200px;top:178px;width:65px;height:22px;background:#dcdcdc;border-right:1px solid #c8c8c8"></div>
<div class="t" style="left:144px;top:182px;font-weight:bold;color:#444">构件列表</div>
<div class="t g" style="left:209px;top:182px">图纸管理</div>
<div class="b" style="left:136px;top:201px;width:274px;height:28px;background:#efefef;border-bottom:1px solid #c8c8c8"></div>
<svg style="left:141px;top:206px" width="180" height="18" viewBox="0 0 180 18">
<path d="M4 2h9l3 3v11H4z" fill="#fff" stroke="#999"/><path d="M1 2h4v4H1z" fill="#ef8a2e"/>
<path d="M65 3h8l3 3v10H65z" fill="#fff" stroke="#5a94d4"/><path d="M67 8h7M67 11h7" stroke="#5a94d4"/>
<path d="M116 3h8l2 2v9h-10z" fill="#fff" stroke="#999"/><rect x="122" y="10" width="7" height="7" fill="#e06060"/>
<path d="M168 2h12v11h-12z" fill="#bcd6f3" stroke="#5a94d4"/><path d="M166 6v11h10" fill="none" stroke="#ef8a2e"/>
</svg>
<div class="t" style="left:160px;top:207px">新建</div><svg style="left:190px;top:213px" width="8" height="6"><path d="M1 1h6l-3 3z" fill="#555"/></svg>
<div class="t" style="left:223px;top:207px">复制</div>
<div class="t" style="left:275px;top:207px">删除</div>
<div class="b" style="left:136px;top:247px;width:274px;height:1px;background:#c8c8c8"></div>
<div class="t" style="left:138px;top:231px;color:#aaa">搜索构件...</div>
<svg style="left:146px;top:257px" width="8" height="8"><path d="M7 1v6H1z" fill="#444"/></svg>
<div class="t" style="left:159px;top:254px">建筑面积</div>
<div class="b" style="left:176px;top:276px;width:48px;height:21px;background:#c5d6ee"></div>
<div class="t" style="left:179px;top:279px">JZMJ-1</div>

<!-- splitter -->
<div class="b" style="left:411px;top:539px;width:4px;height:171px;background:#6d7077"></div>

<!-- properties panel -->
<div class="b" style="left:135px;top:590px;width:276px;height:407px;background:#fff;border:1px solid #b9bcc1;border-bottom:0"></div>
<div class="b" style="left:136px;top:590px;width:274px;height:12px;background:#d3d4d8"></div>
<div class="t" style="left:397px;top:588px;color:#777;font-size:13px;font-weight:bold">×</div>
<div class="b" style="left:136px;top:602px;width:64px;height:23px;background:#efefef"></div>
<div class="b" style="left:200px;top:602px;width:65px;height:22px;background:#dcdcdc;border-right:1px solid #c8c8c8"></div>
<div class="t" style="left:144px;top:605px;font-weight:bold;color:#444">属性列表</div>
<div class="t g" style="left:209px;top:605px">图层管理</div>
<div class="b" style="left:136px;top:624px;width:273px;height:1px;background:#c8c8c8"></div>
<div class="b" style="left:136px;top:625px;width:22px;height:372px;background:#efefef;border-right:1px solid #d8d8d8"></div>
<div class="b" style="left:158px;top:625px;width:100px;height:21px;background:#efefef;text-align:center;line-height:21px;border-bottom:1px solid #d0d0d0;color:#444">属性名称</div>
<div class="b" style="left:258px;top:625px;width:150px;height:21px;background:#7eb7f5;color:#fff;text-align:center;line-height:21px;font-weight:bold">属性值</div>

<div class="row" style="top:646px;height:21px"><div class="n" style="background:#7eb7f5;color:#fff;font-weight:bold">1</div><div class="c1" style="color:#2f6fe0">名称</div><div class="c2" style="border:2px solid #777;border-top:0;padding-left:2px">JZMJ-1</div></div>
<div class="row" style="top:667px"><div class="n">2</div><div class="c1">底标高(m)</div><div class="c2">层底标高(14.5)</div></div>
<div class="row" style="top:688px"><div class="n">3</div><div class="c1">建筑面积计算...</div><div class="c2">计算全部</div></div>
<div class="row" style="top:709px"><div class="n">4</div><div class="c1">备注</div><div class="c2"></div></div>
<div class="row" style="top:730px;background:#e8e8e8"><div class="n">5</div><div class="c1" style="left:43px">土建业务属性</div><div class="c2"></div><div class="b" style="left:24px;top:4px;width:12px;height:12px;border:1px solid #666;border-radius:2px;background:#fff;text-align:center;line-height:10px;font-size:12px">+</div></div>
<div class="row" style="top:751px;background:#e8e8e8"><div class="n">7</div><div class="c1" style="left:43px">显示样式</div><div class="c2"></div><div class="b" style="left:24px;top:4px;width:12px;height:12px;border:1px solid #666;border-radius:2px;background:#fff;text-align:center;line-height:10px;font-size:12px">+</div></div>
<div class="b" style="left:158px;top:772px;width:251px;height:225px;background:#fff"></div>

<!-- dialog -->
<div class="b" style="left:323px;top:3px;width:752px;height:478px;background:#efefef;border:1px solid #bdc3cb;border-top:0"></div>
<div class="b" style="left:323px;top:3px;width:752px;height:27px;background:#2e7fe0"></div>
<div class="t" style="left:332px;top:8px;color:#fff;font-size:12px">查看工程量计算式</div>
<svg style="left:1000px;top:10px" width="70" height="12" viewBox="0 0 70 12"><path d="M1 9h8" stroke="#fff" stroke-width="2"/><path d="M29.500 2.500h7v7h-7z" fill="none" stroke="#fff" stroke-width="1.400"/><path d="M58 2l7 7M65 2l-7 7" stroke="#fff" stroke-width="1.400"/></svg>

<div class="gp" style="left:334px;top:48px;width:198px;height:48px"></div>
<div class="lg" style="left:341px;top:40px">工程量类别</div>
<svg style="left:342px;top:69px" width="110" height="14"><circle cx="7" cy="7" r="5.500" fill="#e8e8e8" stroke="#c4c4c4"/><circle cx="7" cy="7" r="3" fill="#bbb"/><circle cx="100" cy="7" r="5.500" fill="#efefef" stroke="#c4c4c4"/></svg>
<div class="t" style="left:362px;top:69px">清单工程量</div>
<div class="t" style="left:455px;top:69px">定额工程量</div>
<div class="t" style="left:539px;top:45px">构件名称:</div>
<div class="in" style="left:625px;top:39px;width:440px;height:26px;padding:5px 4px 0;line-height:16px">JZMJ-1</div>
<div class="t" style="left:539px;top:77px">工程量名称:</div>
<div class="in" style="left:625px;top:71px;width:440px;height:26px;padding:5px 4px 0;line-height:16px">[全部]</div>
<svg style="left:1052px;top:49px" width="10" height="40"><path d="M1 1h7l-3.500 4zM1 33h7l-3.500 4z" fill="#666"/></svg>

<div class="gp" style="left:334px;top:112px;width:731px;height:203px"></div>
<div class="lg" style="left:341px;top:104px">计算机算量</div>
<div class="in" style="left:343px;top:130px;width:712px;height:176px;border-color:#b5b5b5 #ddd #ddd #ddd"></div>
<div class="t d" style="left:348px;top:136px;color:#222"><b style="letter-spacing:0">原始面积</b>=371.9m2</div>
<div class="t d" style="left:348px;top:152px;color:#222"><b style="letter-spacing:0">面积</b>=128.8975<span style="margin:0 2px">&lt;</span>建筑面积<span style="margin:0 2px">&gt;</span>=128.8975m2</div>
<div class="t d" style="left:348px;top:170px;color:#222"><b style="letter-spacing:0">周长</b>=86.4m</div>
<div class="t d" style="left:348px;top:187px;color:#222"><b style="letter-spacing:0">综合脚手架面积</b>=128.8975m2</div>

<div class="gp" style="left:334px;top:331px;width:731px;height:108px"></div>
<div class="lg" style="left:341px;top:323px">手工算量</div>
<div class="in" style="left:343px;top:349px;width:712px;height:50px;border-color:#b5b5b5 #ddd #ddd #ddd"></div>
<div class="btn" style="left:343px;top:405px;width:100px;height:25px;border-color:#b5b5b5">重新输入</div>
<div class="t" style="left:469px;top:410px">手工算量结果=</div>
<div class="b" style="left:555px;top:407px;width:500px;height:21px;background:#faf0e6;border:1px solid #e4e4e4"></div>
<div class="btn" style="left:333px;top:446px;width:140px;height:25px">查看计算规则</div>
<div class="btn" style="left:479px;top:446px;width:140px;height:25px">查看三维扣减图</div>
<div class="btn" style="left:625px;top:446px;width:140px;height:25px">显示详细计算式</div>
<svg style="left:1062px;top:469px" width="12" height="10"><path d="M8 1h2v2H8zM4 4h2v2H4zM8 4h2v2H8zM1 7h2v2H1zM4 7h2v2H4zM8 7h2v2H8z" fill="#888"/></svg>

<!-- red annotation arrows -->
<svg style="left:0;top:0" width="1920" height="997" viewBox="0 0 1920 997">
<polygon points="584,168 601,167 599,170 853,318 591,179 590,183" fill="#ff2010"/>
<polygon points="297,708 307,722 303,720 329,892 296,720 290,724" fill="#ff2010"/>
</svg>
</div></body></html>
